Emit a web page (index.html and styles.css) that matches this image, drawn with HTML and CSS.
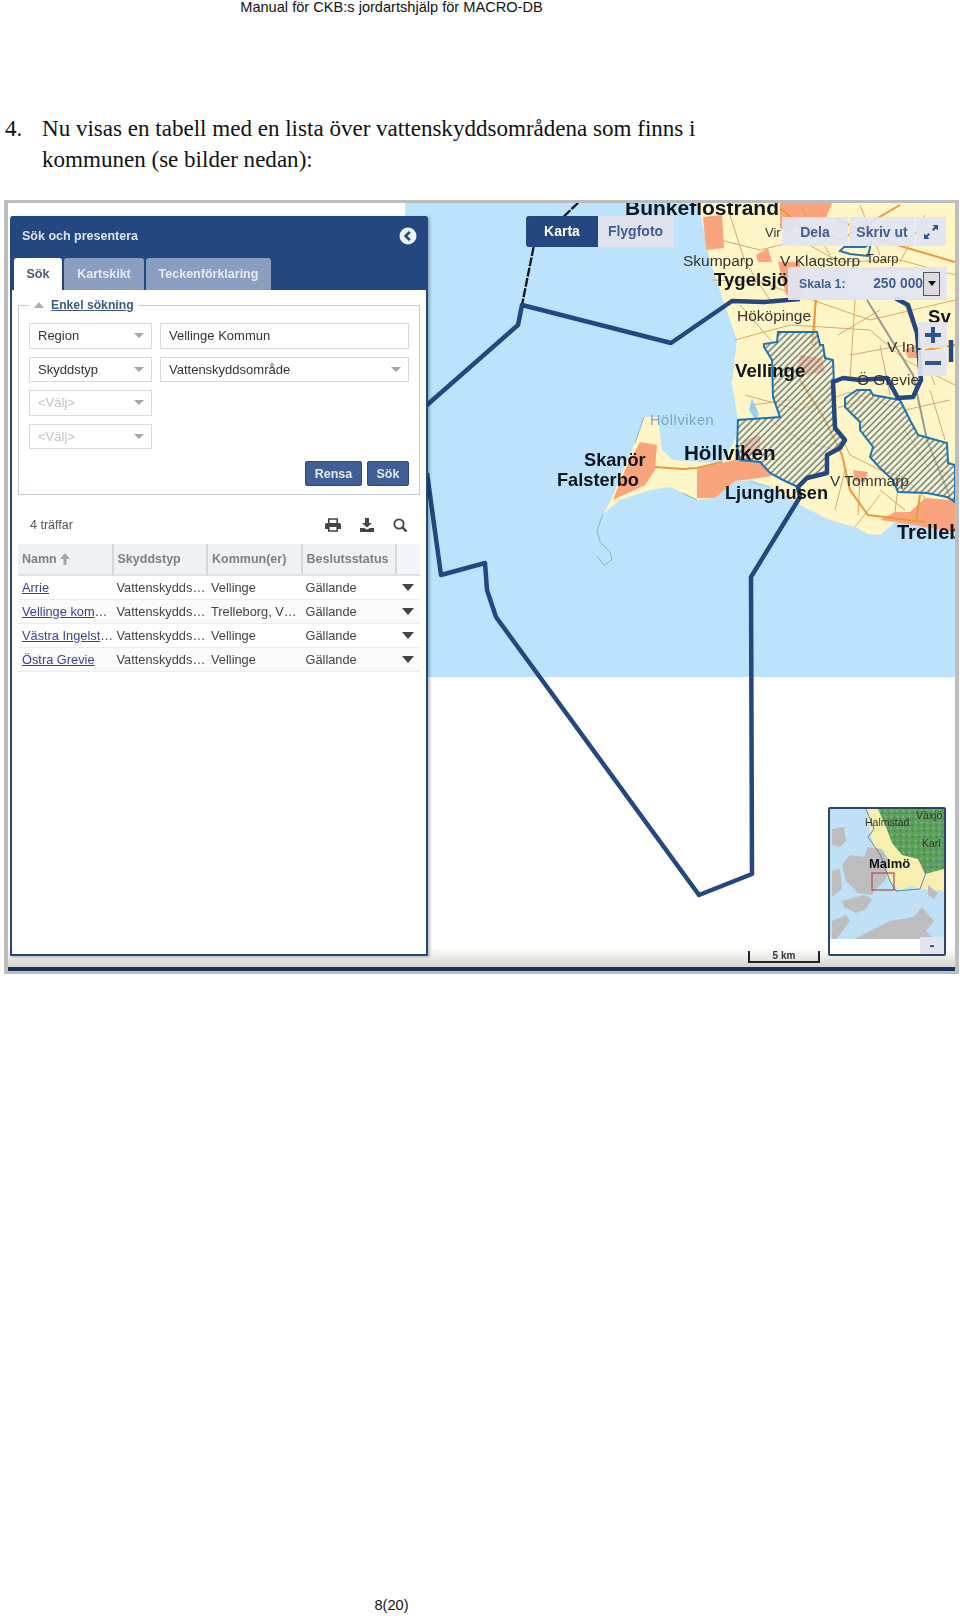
FILE: index.html
```html
<!DOCTYPE html>
<html lang="sv">
  <head>
    <meta charset="UTF-8" />
    <title>Manual för CKB:s jordartshjälp för MACRO-DB</title>
    <link rel="stylesheet" href="styles.css">
  </head>

  <body>
    <header class="running-head">Manual för CKB:s jordartshjälp för MACRO-DB</header>

    <div class="step">
      <span class="step-no">4.</span>
      <p class="step-text">Nu visas en tabell med en lista över vattenskyddsområdena som finns i kommunen (se bilder nedan):</p>
    </div>

    <div class="shot">
      <!-- map background, viewBox uses page coordinates -->
      <svg class="map" viewBox="8 203 947 768" width="947" height="768">
        <defs>
          <pattern id="hatch" width="4.6" height="4.6" patternUnits="userSpaceOnUse" patternTransform="rotate(-45)">
            <rect width="4.6" height="4.6" fill="#f4f3dc" fill-opacity=".45" />
            <line x1="0" y1="1" x2="4.6" y2="1" stroke="#33565f" stroke-width="1.1" />
          </pattern>
          <pattern id="mottle" width="6" height="6" patternUnits="userSpaceOnUse">
            <rect width="6" height="6" fill="#5d9f5c" />
            <circle cx="1.5" cy="1.5" r="1" fill="#8fbb72" />
            <circle cx="4.5" cy="4" r="1" fill="#3c8a4c" />
          </pattern>
          <linearGradient id="fade" x1="0" y1="0" x2="0" y2="1">
            <stop offset="0" stop-color="#ffffff" />
            <stop offset="1" stop-color="#d4d4cc" />
          </linearGradient>
        </defs>
        <rect x="8" y="203" width="947" height="768" fill="#fff" />
        <rect x="405" y="203" width="550" height="474" fill="#bce3fb" />

        <!-- land -->
        <path class="land" d="M698 203L955 203L955 532L930 528L895 522L880 535L868 534L855 527L830 520L800 505L770 487L752 480L735 481L722 492L715 498L697 500L683 493L670 487L650 490L620 500L603 514L612 498L623 470L635 443L644 417L658 417L662 450L673 460L697 462L722 463L735 440L738 420L732 383L737 340L723 300L710 260L704 232Z" />

        <!-- built up areas -->
        <g class="urban">
          <path d="M703 217L722 215L724 248L706 250Z" />
          <path d="M780 203L832 203L826 218L796 219L790 233L780 228Z" />
          <path d="M756 255L768 248L772 262L758 262Z" />
          <path d="M778 262L800 262L802 295L786 295Z" />
          <path d="M640 442L657 445L655 470L645 485L613 500L625 470Z" />
          <path d="M697 469L722 463L742 458L760 462L772 476L752 479L735 481L722 492L715 498L697 498Z" />
          <path d="M800 355L822 358L825 372L795 377Z" />
          <path d="M745 440L760 435L760 452L742 458Z" />
          <path d="M853 470L868 472L865 482L855 481Z" />
          <path d="M880 520L895 512L910 512L925 498L950 500L955 503L955 532L930 528L895 522Z" />
          <path d="M905 350L916 345L918 358L908 358Z" />
        </g>

        <!-- roads -->
        <g class="roads">
          <path d="M720 240L760 250L800 240L840 262L900 260L955 275" />
          <path d="M712 280L760 282L812 300L870 320L955 300" />
          <path d="M735 340L790 325L870 330L905 360L955 385" />
          <path d="M745 395L800 410L850 392L905 410L950 400" />
          <path d="M815 300L815 350M855 300L850 380M880 345L890 395M905 305L935 385" />
          <path d="M838 430L850 455L880 470L905 478L925 498M860 480L858 515M880 490L905 510" />
          <path d="M770 420L800 440L835 450M752 405L790 400M905 430L930 470" />
          <path d="M730 215L745 262L770 300M800 205L830 255M860 205L880 255M925 215L900 262" />
          <path d="M740 305L775 345M838 335L880 310M850 355L905 345M838 408L860 400M845 470L835 510" />
          <path d="M880 495L855 527M900 470L895 512M930 390L945 440M940 470L955 480" />
        </g>
        <path class="road-main" d="M655 467L683 469L697 468L722 462" />
        <path class="road-main" d="M800 380L825 420L842 455L850 490L868 515L925 522" />
        <path class="road-main" d="M816 300L812 345" />
        <path class="road-main" d="M920 495L916 522" />
        <path class="road-main" d="M780 208L800 225L840 240L900 205" />
        <path class="road-main" d="M925 350L955 345" />
        <path class="road-main" d="M835 218L880 240L955 262" />
        <path class="rail" d="M867 300L913 375L927 440L950 497" />

        <!-- water on land and thin coast lines -->
        <path class="coast" d="M603 514L597 530L600 542L610 552L612 560L604 565L597 556" />
        <path class="coast" d="M644 417L635 443M683 493L697 500" />
        <path d="M752 398L759 414L756 421L749 410Z" fill="#9dcdf0" />
        <path d="M750 482L770 487" stroke="#9cc6e0" fill="none" />

        <!-- protection zones -->
        <path class="zone" d="M778 332L817 332L820 345L823 345L825 358L833 360L835 407L835 428L845 440L840 448L827 455L827 473L807 478L798 487L783 480L770 473L760 462L740 460L737 447L738 420L780 417L773 397L772 360L764 347L764 344L777 342Z" />
        <path class="zone" d="M857 390L870 390L873 395L900 400L910 420L918 435L947 443L948 463L955 465L955 502L947 497L927 493L898 492L893 480L880 468L870 457L873 447L860 430L860 422L845 407L845 398Z" />
        <path d="M840 251L844 247L865 247L871 243L868 256L850 254Z" fill="none" stroke="#1f74b0" stroke-width="2" />

        <!-- municipality border -->
        <path class="border-dash" d="M578 203L534 245L522 305" />
        <g class="border">
          <path d="M427 405L518 325L522 305L671 343L732 301L764 302L800 299" />
          <path d="M895 298L908 305L917 333L921 380L913 397L898 398L887 378L860 380L843 378L833 382L835 428L845 440L840 448L827 455L827 473L807 478L798 487L800 497L751 577L752 874L699 895L496 617L487 590L485 563L441 575L427 473" />
          <path d="M951 340L951 362" stroke-width="6" />
        </g>
        <rect x="8" y="948" width="947" height="19" fill="url(#fade)" />
        <rect x="8" y="967" width="947" height="4" fill="#14305c" />

        <!-- place names -->
        <g class="place">
          <text class="big" x="625" y="215">Bunkeflostrand</text>
          <text class="small" x="765" y="237">Vir</text>
          <text x="683" y="266">Skumparp</text>
          <text x="780" y="266">V Klagstorp</text>
          <text class="small" x="866" y="263">Toarp</text>
          <text class="bold" x="714" y="286">Tygelsjö</text>
          <text x="737" y="321">Hököpinge</text>
          <text class="bold" x="928" y="323">Sv</text>
          <text x="887" y="352">V In</text>
          <text class="bold" x="735" y="377">Vellinge</text>
          <text x="857" y="385">Ö Grevie</text>
          <text class="water" x="650" y="425">Höllviken</text>
          <text class="bold bold-l" x="684" y="460">Höllviken</text>
          <text class="bold bold-s" x="584" y="466">Skanör</text>
          <text class="bold bold-s" x="557" y="486">Falsterbo</text>
          <text class="bold bold-s" x="725" y="499">Ljunghusen</text>
          <text x="830" y="486">V Tommarp</text>
          <text class="bold bold-t" x="897" y="539">Trelleb</text>
        </g>
      </svg>

      <!-- left search panel -->
      <section class="panel">
        <div class="panel-head">
          <h2 class="panel-title">Sök och presentera</h2>
          <svg class="panel-close" viewBox="0 0 18 18" width="18" height="18">
            <circle cx="9" cy="9" r="8.5" fill="#eef1f6" />
            <path d="M10.8 4.8L6.6 9L10.8 13.2" fill="none" stroke="#24477f" stroke-width="2.6" />
          </svg>
        </div>
        <div class="tabs">
          <span class="tab tab-active">Sök</span>
          <span class="tab tab-layers">Kartskikt</span>
          <span class="tab tab-legend">Teckenförklaring</span>
        </div>

        <div class="panel-body">
          <fieldset class="search-box">
            <legend class="search-legend"><i class="legend-arrow"></i><a href="#">Enkel sökning</a></legend>
            <div class="search-grid">
              <div class="field"><span>Region</span><i class="caret"></i></div>
              <div class="field"><span>Vellinge Kommun</span></div>
              <div class="field"><span>Skyddstyp</span><i class="caret"></i></div>
              <div class="field"><span>Vattenskyddsområde</span><i class="caret"></i></div>
              <div class="field field-empty"><span>&lt;Välj&gt;</span><i class="caret"></i></div>
              <div></div>
              <div class="field field-empty"><span>&lt;Välj&gt;</span><i class="caret"></i></div>
            </div>
            <div class="search-buttons">
              <button class="btn btn-clear" type="button">Rensa</button>
              <button class="btn btn-search" type="button">Sök</button>
            </div>
          </fieldset>

          <div class="result-bar">
            <span>4 träffar</span>
            <div class="result-icons">
              <svg viewBox="0 0 16 14" width="16" height="14">
                <path d="M0 7a2 2 0 0 1 2-2h12a2 2 0 0 1 2 2v4h-3v-2H3v2H0Z" fill="#444" />
                <path d="M3.8 5V1h8.4v4M3.8 9v4h8.4V9" fill="none" stroke="#444" stroke-width="1.6" />
              </svg>
              <svg viewBox="0 0 16 14" width="16" height="14">
                <path d="M6 0h4v5h3L8 9.5 3 5h3Z" fill="#444" />
                <path d="M1 10h4l3 1.5 3-1.5h4v4H1Z" fill="#444" />
              </svg>
              <svg viewBox="0 0 16 14" width="16" height="14">
                <circle cx="7" cy="6" r="4.6" fill="none" stroke="#444" stroke-width="1.9" />
                <path d="M10.4 9.4L14.6 13.6" stroke="#444" stroke-width="2.2" />
              </svg>
            </div>
          </div>

          <table class="results">
            <thead>
              <tr>
                <th>Namn
                  <svg class="sort-arrow" viewBox="0 0 10 12" width="10" height="12">
                    <path d="M5 0L10 6H6.5V12H3.5V6H0Z" fill="#a3a7ad" />
                  </svg>
                </th>
                <th>Skyddstyp</th>
                <th>Kommun(er)</th>
                <th>Beslutsstatus</th>
                <th></th>
              </tr>
            </thead>
            <tbody>
              <tr>
                <td><a href="#">Arrie</a></td>
                <td>Vattenskydds…</td>
                <td>Vellinge</td>
                <td>Gällande</td>
                <td><i class="row-arrow"></i></td>
              </tr>
              <tr>
                <td><a href="#">Vellinge kom</a>…</td>
                <td>Vattenskydds…</td>
                <td>Trelleborg, V…</td>
                <td>Gällande</td>
                <td><i class="row-arrow"></i></td>
              </tr>
              <tr>
                <td><a href="#">Västra Ingelst</a>…</td>
                <td>Vattenskydds…</td>
                <td>Vellinge</td>
                <td>Gällande</td>
                <td><i class="row-arrow"></i></td>
              </tr>
              <tr>
                <td><a href="#">Östra Grevie</a></td>
                <td>Vattenskydds…</td>
                <td>Vellinge</td>
                <td>Gällande</td>
                <td><i class="row-arrow"></i></td>
              </tr>
            </tbody>
          </table>
        </div>
      </section>

      <!-- controls on top of the map -->
      <div class="basemap">
        <span class="basemap-on">Karta</span>
        <span class="basemap-off">Flygfoto</span>
      </div>

      <div class="tools">
        <span class="tool tool-share">Dela</span>
        <span class="tool tool-print">Skriv ut</span>
        <span class="tool tool-expand">
          <svg viewBox="0 0 16 16" width="16" height="16">
            <path d="M9.5 1H15V6.5L13 4.5L10.5 7L9 5.5L11.5 3Z M6.5 15H1V9.5L3 11.5L5.5 9L7 10.5L4.5 13Z" fill="#2f5590" />
          </svg>
        </span>
      </div>

      <div class="scale">
        <span class="scale-label">Skala 1:</span>
        <span class="scale-value">250 000</span>
        <span class="scale-btn"><i></i></span>
      </div>

      <div class="zoom">
        <span class="zoom-btn">
          <svg viewBox="0 0 16 16" width="16" height="16"><path d="M6 0h4v6h6v4h-6v6H6v-6H0V6h6Z" fill="#2f5590" /></svg>
        </span>
        <span class="zoom-btn">
          <svg viewBox="0 0 16 16" width="16" height="16"><rect y="6" width="16" height="4" fill="#2f5590" /></svg>
        </span>
      </div>

      <div class="overview">
        <svg viewBox="0 0 114 145" width="114" height="145">
          <rect width="114" height="145" fill="#bfe0f5" />
          <path d="M36 0H114V82L92 80L80 77L70 82L60 72L52 58L44 40L40 20Z" fill="#f6efb0" />
          <path d="M48 0H114V60L95 65L88 50L72 46L62 34L56 18Z" fill="url(#mottle)" />
          <g fill="#bdbdbd">
            <path d="M2 20L14 18L16 32L10 38L2 36Z" />
            <path d="M38 38L52 40L58 50L56 70L46 80L42 86L28 84L16 72L12 56L20 46L34 48Z" />
            <path d="M2 62L10 60L12 80L2 88Z" />
            <path d="M12 92L34 86L42 90L36 100L26 104L14 98Z" />
            <path d="M2 112L16 106L20 112L8 128L2 132Z" />
            <path d="M24 130L60 112L84 108L92 98L104 112L96 122L104 130Z" />
            <path d="M98 76L108 84L104 90L98 86Z" />
          </g>
          <path d="M36 0L44 20L38 28L50 45L60 72L66 82L90 80L98 58L114 50" fill="none" stroke="#5e86a8" stroke-width="1" />
          <rect x="42" y="64" width="22" height="17" fill="none" stroke="#b04a50" stroke-width="1.2" />
          <rect y="130" width="114" height="15" fill="#fff" />
          <text class="ov-label" x="35" y="17">Halmstad</text>
          <text class="ov-label" x="86" y="10">Växjö</text>
          <text class="ov-label" x="92" y="38">Karl</text>
          <text class="ov-city" x="39" y="59">Malmö</text>
        </svg>
        <span class="overview-btn">-</span>
      </div>

      <div class="scalebar">5 km</div>
    </div>

    <footer class="page-no">8(20)</footer>
  </body>
</html>
```

FILE: styles.css
```css
body {
  margin: 0;
  background-color: #fff;
  font-family: "Liberation Sans", Arial, sans-serif;
  color: #111;
}

.running-head {
  width: 783px;
  height: 14px;
  line-height: 14px;
  font-size: 14.6px;
  text-align: center;
}

.step {
  display: flex;
  margin-top: 99px;
  font-family: "Liberation Serif", "Times New Roman", serif;
  font-size: 23.05px;
  line-height: 30.5px;
}

.step-no {
  width: 42px;
  padding-left: 5px;
  box-sizing: border-box;
  flex: none;
}

.step-text {
  margin: 0;
  width: 670px;
}

.shot {
  position: relative;
  box-sizing: border-box;
  width: 955px;
  height: 774px;
  margin: 26px 0 0 4px;
  border-style: solid;
  border-width: 3px 4px;
  border-color: #bdbdbd;
  background-color: #fff;
  overflow: hidden;
  filter: blur(0.4px);
}

.map {
  display: block;
}

.land {
  fill: #fff6c8;
}

.urban path {
  fill: #f9a47c;
}

.roads path {
  fill: none;
  stroke: #d8a868;
  stroke-width: 1;
}

.road-main {
  fill: none;
  stroke: #e99a3c;
  stroke-width: 2;
}

.rail {
  fill: none;
  stroke: #9a9a90;
  stroke-width: 2;
}

.coast {
  fill: none;
  stroke: #7fb4d4;
  stroke-width: 1;
}

.zone {
  fill: url(#hatch);
  stroke: #1f74b0;
  stroke-width: 2;
}

.border path {
  fill: none;
  stroke: #24477f;
  stroke-width: 4.5;
  stroke-linejoin: round;
}

.border-dash {
  fill: none;
  stroke: #1a1a1a;
  stroke-width: 2.4;
  stroke-dasharray: 9 1.5;
}

.place text {
  font-size: 15.5px;
  fill: #333;
}

.place .bold {
  font-size: 18.6px;
  font-weight: bold;
  fill: #10161c;
}

.place .bold-l {
  font-size: 20.6px;
}

.place .bold-t {
  font-size: 20px;
}

.place .bold-s {
  font-size: 18.2px;
}

.place .big {
  font-size: 21px;
  font-weight: bold;
  fill: #10161c;
}

.place .small {
  font-size: 13px;
}

.place .water {
  font-size: 14.5px;
  letter-spacing: 0.6px;
  fill: #7da7c0;
}

/* search panel */
.panel {
  position: absolute;
  left: 2px;
  top: 13px;
  box-sizing: border-box;
  width: 418px;
  height: 740px;
  border: 2px solid #24477f;
  border-top: none;
  border-radius: 3px 3px 0 0;
  background-color: #fff;
  box-shadow: 2px 1px 3px rgba(0, 0, 0, 0.25);
  font-size: 12.8px;
}

.panel-head {
  display: flex;
  align-items: center;
  justify-content: space-between;
  height: 42px;
  padding: 0 9px 2px 10px;
  box-sizing: border-box;
  background-color: #24477f;
}

.panel-title {
  margin: 0;
  font-size: 12.5px;
  font-weight: bold;
  color: #dde4ef;
}

.tabs {
  display: flex;
  gap: 2px;
  height: 32px;
  padding-left: 2px;
  background-color: #24477f;
}

.tab {
  display: flex;
  align-items: center;
  justify-content: center;
  box-sizing: border-box;
  border-radius: 3px 3px 0 0;
  background-color: #8a9fc0;
  color: #e6ebf3;
  font-weight: bold;
  font-size: 12.5px;
}

.tab-active {
  width: 48px;
  background-color: #fff;
  color: #4a5a72;
}

.tab-layers {
  width: 80px;
}

.tab-legend {
  width: 125px;
}

.panel-body {
  padding: 7px 6px 0;
}

.search-box {
  margin: 0;
  padding: 10px 10px 8px;
  border: 1px solid #c3cad4;
  min-width: 0;
}

.search-legend {
  display: flex;
  align-items: center;
  height: 16px;
  padding: 0 4px;
  font-weight: bold;
  font-size: 12.2px;
}

.search-legend a {
  color: #3c5a86;
}

.legend-arrow {
  width: 0;
  height: 0;
  margin: 0 7px 0 1px;
  border-left: 5px solid transparent;
  border-right: 5px solid transparent;
  border-bottom: 6px solid #a9aeb5;
}

.search-grid {
  display: grid;
  grid-template-columns: 123px 249px;
  grid-auto-rows: 25.5px;
  gap: 8px;
}

.field {
  display: flex;
  align-items: center;
  justify-content: space-between;
  box-sizing: border-box;
  padding: 0 7px 0 8px;
  border: 1px solid #d6dade;
  font-size: 13px;
  color: #333;
}

.field-empty {
  color: #c2c2c2;
}

.caret {
  width: 0;
  height: 0;
  border-left: 5px solid transparent;
  border-right: 5px solid transparent;
  border-top: 5px solid #a3a6aa;
}

.search-buttons {
  display: flex;
  justify-content: flex-end;
  gap: 5px;
  margin-top: 12px;
}

.btn {
  height: 25px;
  padding: 0;
  border: 1px solid #2c4a7e;
  border-radius: 2px;
  background-color: #3f5f96;
  color: #e3e8f1;
  font-family: inherit;
  font-size: 12.5px;
  font-weight: bold;
}

.btn-clear {
  width: 57px;
}

.btn-search {
  width: 42px;
}

.result-bar {
  display: flex;
  align-items: center;
  justify-content: space-between;
  height: 22px;
  margin: 19px 0 8px;
  padding: 0 12px;
  color: #555;
  font-size: 12.5px;
}

.result-icons {
  display: flex;
  gap: 17.5px;
}

.results {
  width: 402px;
  border-collapse: collapse;
  table-layout: fixed;
  font-size: 12.8px;
}

.results th {
  width: 94.5px;
  height: 31px;
  padding: 0 0 0 4px;
  box-sizing: border-box;
  border-right: 2px solid #d4d7dc;
  border-bottom: 2px solid #dfe1e4;
  background-color: #eff1f5;
  color: #7c8188;
  font-size: 12.5px;
  font-weight: bold;
  text-align: left;
  white-space: nowrap;
}

.results th:last-child {
  width: 24px;
  border-right: none;
  background-color: #f4f5f7;
}

.sort-arrow {
  vertical-align: -2px;
}

.results td {
  height: 24px;
  padding: 0 0 0 4px;
  box-sizing: border-box;
  border-bottom: 1px solid #ececec;
  color: #444;
  white-space: nowrap;
}

.results tr:nth-child(even) td {
  background-color: #fafafa;
}

.results a {
  color: #3d3d9e;
}

.row-arrow {
  display: block;
  width: 0;
  height: 0;
  margin-left: 2px;
  border-left: 6px solid transparent;
  border-right: 6px solid transparent;
  border-top: 7px solid #444;
}

/* map controls */
.basemap {
  position: absolute;
  left: 518px;
  top: 13px;
  display: flex;
  height: 31px;
  font-weight: bold;
  font-size: 14px;
  line-height: 31px;
  text-align: center;
}

.basemap-on {
  width: 72px;
  border-radius: 3px 0 0 3px;
  background-color: #24477f;
  color: #fff;
}

.basemap-off {
  width: 75px;
  background-color: #e1e4ee;
  color: #3f5f96;
}

.tools {
  position: absolute;
  left: 774px;
  top: 14px;
  display: flex;
  gap: 1px;
  height: 29px;
  font-weight: bold;
  font-size: 14px;
  color: #3f5f96;
}

.tool {
  display: flex;
  align-items: center;
  justify-content: center;
  background-color: rgba(225, 228, 240, 0.92);
}

.tool-share,
.tool-print {
  width: 66px;
}

.tool-expand {
  width: 30px;
}

.scale {
  position: absolute;
  left: 780px;
  top: 64px;
  display: flex;
  align-items: center;
  box-sizing: border-box;
  width: 159px;
  height: 33px;
  background-color: rgba(225, 228, 240, 0.95);
  color: #3f5f96;
  font-weight: bold;
}

.scale-label {
  width: 60px;
  padding-left: 11px;
  box-sizing: border-box;
  font-size: 12.3px;
}

.scale-value {
  width: 75px;
  height: 25px;
  line-height: 25px;
  text-align: right;
  background-color: #e6e8f1;
  font-size: 13.8px;
}

.scale-btn {
  display: flex;
  align-items: center;
  justify-content: center;
  box-sizing: border-box;
  width: 17px;
  height: 24px;
  border: 1px solid #555;
  background-color: #dcdcdc;
}

.scale-btn i {
  width: 0;
  height: 0;
  border-left: 4px solid transparent;
  border-right: 4px solid transparent;
  border-top: 5px solid #111;
}

.zoom {
  position: absolute;
  left: 910px;
  top: 119px;
  display: flex;
  flex-direction: column;
  gap: 2px;
  width: 29px;
}

.zoom-btn {
  display: flex;
  align-items: center;
  justify-content: center;
  height: 26px;
  background-color: rgba(225, 228, 240, 0.9);
}

.overview {
  position: absolute;
  left: 820px;
  top: 604px;
  box-sizing: border-box;
  width: 118px;
  height: 149px;
  border: 2px solid #2a4768;
  border-radius: 2px;
  background-color: #fff;
}

.overview svg {
  display: block;
}

.overview-btn {
  position: absolute;
  right: 0;
  bottom: 0;
  width: 24px;
  height: 17px;
  background-color: #e2e5ee;
  color: #2a4768;
  font-weight: bold;
  font-size: 15px;
  line-height: 15px;
  text-align: center;
}

.ov-label {
  font-family: "Liberation Sans", Arial, sans-serif;
  font-size: 10.5px;
  fill: #333;
}

.ov-city {
  font-family: "Liberation Sans", Arial, sans-serif;
  font-size: 13px;
  font-weight: bold;
  fill: #111;
}

.scalebar {
  position: absolute;
  left: 740px;
  top: 748px;
  box-sizing: border-box;
  width: 72px;
  height: 12px;
  border: 2px solid #222;
  border-top: none;
  font-size: 10px;
  font-weight: bold;
  line-height: 10px;
  text-align: center;
  color: #333;
}

.page-no {
  width: 783px;
  margin-top: 623px;
  font-size: 14.6px;
  line-height: 16px;
  text-align: center;
}
```
